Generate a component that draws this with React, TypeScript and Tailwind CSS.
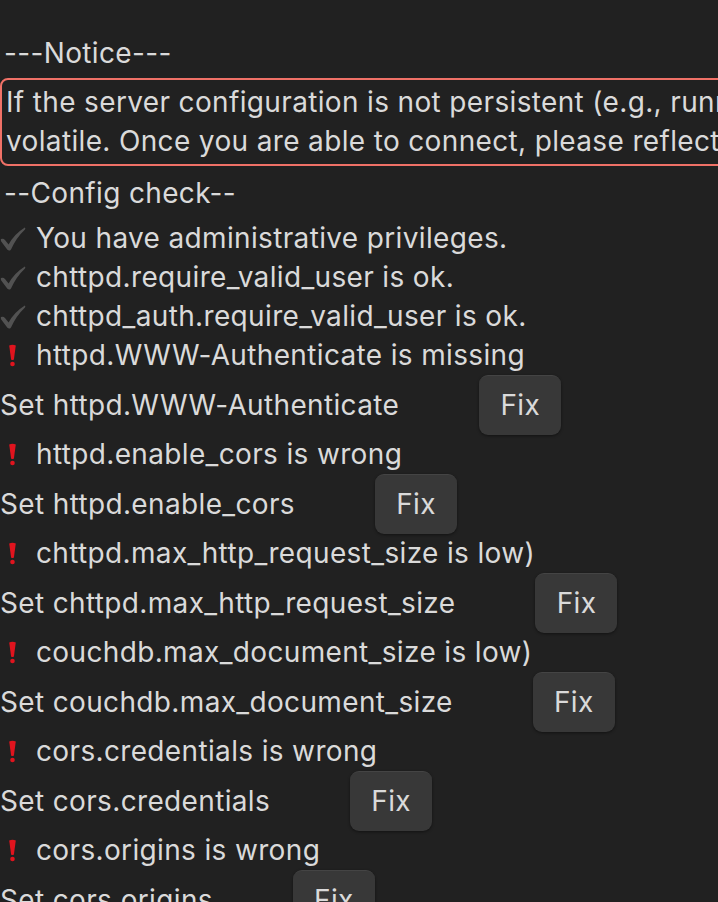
import React from "react";

type Item =
  | { kind: "ok"; text: string }
  | { kind: "warn"; text: string; fix: string };

const items: Item[] = [
  { kind: "ok", text: "You have administrative privileges." },
  { kind: "ok", text: "chttpd.require_valid_user is ok." },
  { kind: "ok", text: "chttpd_auth.require_valid_user is ok." },
  { kind: "warn", text: "httpd.WWW-Authenticate is missing", fix: "Set httpd.WWW-Authenticate" },
  { kind: "warn", text: "httpd.enable_cors is wrong", fix: "Set httpd.enable_cors" },
  { kind: "warn", text: "chttpd.max_http_request_size is low)", fix: "Set chttpd.max_http_request_size" },
  { kind: "warn", text: "couchdb.max_document_size is low)", fix: "Set couchdb.max_document_size" },
  { kind: "warn", text: "cors.credentials is wrong", fix: "Set cors.credentials" },
  { kind: "warn", text: "cors.origins is wrong", fix: "Set cors.origins" },
];

// brush-like check, grey like the emoji in the shot
const CheckIcon = () => (
  <svg width="26" height="26" viewBox="0 0 26 26">
    <path
      d="M1 13 Q3.4 12 5 14 L8.6 18.6 Q14 8.4 24.8 1.6 Q25.8 2.4 25 3.4 Q16.4 11.4 11 23.4 Q9.4 25.6 7.4 23.8 L1.2 15.4 Q0.4 14 1 13 Z"
      fill="#525252"
    />
  </svg>
);

const BangIcon = () => (
  <svg width="26" height="26" viewBox="0 0 26 26">
    <path d="M9.2 2.5 Q12.5 1.2 15.8 2.5 L13.9 16.5 Q12.5 17.5 11.1 16.5 Z" fill="#e0141e" />
    <circle cx="12.5" cy="21" r="2.3" fill="#e0141e" />
  </svg>
);

const Status = ({ kind, text }: { kind: "ok" | "warn"; text: string }) => (
  <div className="flex h-[39px] items-center whitespace-nowrap">
    <span className="mr-[10px] flex w-[26px] items-center justify-center">
      {kind === "ok" ? <CheckIcon /> : <BangIcon />}
    </span>
    <span>{text}</span>
  </div>
);

const FixRow = ({ label }: { label: string }) => (
  <div className="flex h-[60px] items-center whitespace-nowrap">
    <span>{label}</span>
    <button className="ml-[80px] h-[60px] w-[82px] rounded-[9px] border-t border-[#444444] bg-[#383838] text-[#dadada] shadow-[0_1px_3px_rgba(0,0,0,0.45)]">
      Fix
    </button>
  </div>
);

export default function App() {
  return (
    <div
      className="h-[902px] w-[718px] overflow-hidden bg-[#212121] text-[28px] leading-[39px] tracking-[0.35px] text-[#dadada]"
      style={{ fontFamily: "Inter, 'Noto Sans', sans-serif" }}
    >
      <div className="w-[1800px] pt-[34px]">
        <div className="mb-[5px] pl-[4px]">---Notice---</div>
        <div className="mb-[8px] rounded-[8px] border-2 border-[#f07167] px-[4px] py-[3px] whitespace-nowrap">
          If the server configuration is not persistent (e.g., running on docker), the values set from here will also be
          <br />
          volatile. Once you are able to connect, please reflect the settings in the server's local.ini.
        </div>
        <div className="mb-[6px] pl-[4px]">--Config check--</div>
        {items.map((it, i) => (
          <React.Fragment key={i}>
            <Status kind={it.kind} text={it.text} />
            {it.kind === "warn" && <FixRow label={it.fix} />}
          </React.Fragment>
        ))}
      </div>
    </div>
  );
}
